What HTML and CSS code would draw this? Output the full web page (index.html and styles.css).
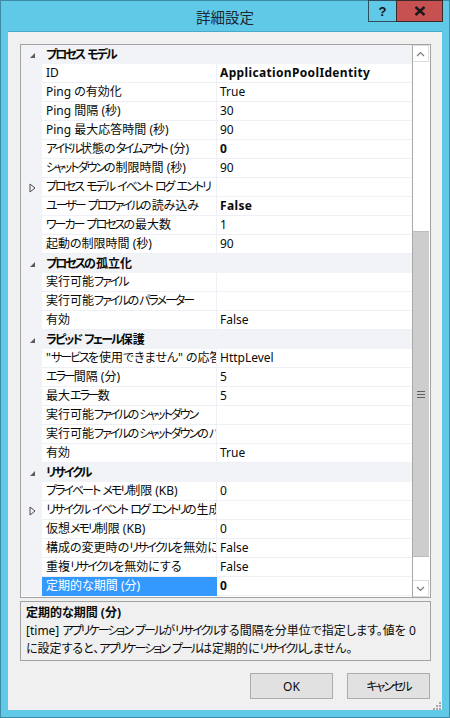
FILE: index.html
```html
<!DOCTYPE html>
<html lang="ja">
<head>
<meta charset="utf-8">
<title>詳細設定</title>
<link rel="stylesheet" href="styles.css">
</head>
<body>
<div class="window">
  <div class="titlebar">
    <span class="title">詳細設定</span>
    <div class="caption-buttons">
      <div class="cap help">?</div>
      <div class="cap close">
        <svg width="12" height="10" viewBox="0 0 12 10"><path d="M1.5 1 L10.5 9 M10.5 1 L1.5 9" stroke="#1a1a1a" stroke-width="2.4" fill="none"/></svg>
      </div>
    </div>
  </div>
  <div class="client">
    <div class="grid">
      <div class="rows">
        <div class="row cat"><span class="gut"><svg class="exp" width="7" height="7" viewBox="0 0 7 7"><polygon points="6,1 6,6 1,6" fill="#5a5a5a"/></svg></span><span class="cname"><span class="k">プロセス</span> <span class="k">モデル</span></span></div>
        <div class="row"><span class="gut"></span><span class="name">ID</span><span class="val b">ApplicationPoolIdentity</span></div>
        <div class="row"><span class="gut"></span><span class="name">Ping の有効化</span><span class="val">True</span></div>
        <div class="row"><span class="gut"></span><span class="name">Ping 間隔 (秒)</span><span class="val">30</span></div>
        <div class="row"><span class="gut"></span><span class="name">Ping 最大応答時間 (秒)</span><span class="val">90</span></div>
        <div class="row"><span class="gut"></span><span class="name"><span class="k">アイドル</span>状態の<span class="k">タイムアウト</span> (分)</span><span class="val b">0</span></div>
        <div class="row"><span class="gut"></span><span class="name"><span class="k">シャットダウン</span>の制限時間 (秒)</span><span class="val">90</span></div>
        <div class="row"><span class="gut"><svg class="col" width="7" height="10" viewBox="0 0 7 10"><polygon points="1,1 6,5 1,9" fill="none" stroke="#4a4a4a" stroke-width="1"/></svg></span><span class="name"><span class="k">プロセス</span> <span class="k">モデル</span> <span class="k">イベント</span> <span class="k">ログ</span> <span class="k">エントリ</span></span><span class="val"></span></div>
        <div class="row"><span class="gut"></span><span class="name"><span class="k">ユーザー</span> <span class="k">プロファイル</span>の読み込み</span><span class="val b">False</span></div>
        <div class="row"><span class="gut"></span><span class="name"><span class="k">ワーカー</span> <span class="k">プロセス</span>の最大数</span><span class="val">1</span></div>
        <div class="row"><span class="gut"></span><span class="name">起動の制限時間 (秒)</span><span class="val">90</span></div>
        <div class="row cat"><span class="gut"><svg class="exp" width="7" height="7" viewBox="0 0 7 7"><polygon points="6,1 6,6 1,6" fill="#5a5a5a"/></svg></span><span class="cname"><span class="k">プロセス</span>の孤立化</span></div>
        <div class="row"><span class="gut"></span><span class="name">実行可能<span class="k">ファイル</span></span><span class="val"></span></div>
        <div class="row"><span class="gut"></span><span class="name">実行可能<span class="k">ファイル</span>の<span class="k">パラメーター</span></span><span class="val"></span></div>
        <div class="row"><span class="gut"></span><span class="name">有効</span><span class="val">False</span></div>
        <div class="row cat"><span class="gut"><svg class="exp" width="7" height="7" viewBox="0 0 7 7"><polygon points="6,1 6,6 1,6" fill="#5a5a5a"/></svg></span><span class="cname"><span class="k">ラピッド</span> <span class="k">フェール</span>保護</span></div>
        <div class="row"><span class="gut"></span><span class="name">"<span class="k">サービス</span>を使用できません" の応答の種類</span><span class="val">HttpLevel</span></div>
        <div class="row"><span class="gut"></span><span class="name"><span class="k">エラー</span>間隔 (分)</span><span class="val">5</span></div>
        <div class="row"><span class="gut"></span><span class="name">最大<span class="k">エラー</span>数</span><span class="val">5</span></div>
        <div class="row"><span class="gut"></span><span class="name">実行可能<span class="k">ファイル</span>の<span class="k">シャットダウン</span></span><span class="val"></span></div>
        <div class="row"><span class="gut"></span><span class="name">実行可能<span class="k">ファイル</span>の<span class="k">シャットダウン</span>の<span class="k">パラメーター</span></span><span class="val"></span></div>
        <div class="row"><span class="gut"></span><span class="name">有効</span><span class="val">True</span></div>
        <div class="row cat"><span class="gut"><svg class="exp" width="7" height="7" viewBox="0 0 7 7"><polygon points="6,1 6,6 1,6" fill="#5a5a5a"/></svg></span><span class="cname"><span class="k">リサイクル</span></span></div>
        <div class="row"><span class="gut"></span><span class="name"><span class="k">プライベート</span> <span class="k">メモリ</span>制限 (KB)</span><span class="val">0</span></div>
        <div class="row"><span class="gut"><svg class="col" width="7" height="10" viewBox="0 0 7 10"><polygon points="1,1 6,5 1,9" fill="none" stroke="#4a4a4a" stroke-width="1"/></svg></span><span class="name"><span class="k">リサイクル</span> <span class="k">イベント</span> <span class="k">ログ</span> <span class="k">エントリ</span>の生成</span><span class="val"></span></div>
        <div class="row"><span class="gut"></span><span class="name">仮想<span class="k">メモリ</span>制限 (KB)</span><span class="val">0</span></div>
        <div class="row"><span class="gut"></span><span class="name">構成の変更時の<span class="k">リサイクル</span>を無効にする</span><span class="val">False</span></div>
        <div class="row"><span class="gut"></span><span class="name">重複<span class="k">リサイクル</span>を無効にする</span><span class="val">False</span></div>
        <div class="row sel"><span class="gut"></span><span class="name">定期的な期間 (分)</span><span class="val b">0</span></div>
      </div>
      <div class="scrollbar">
        <div class="arrow up"><svg width="9" height="6" viewBox="0 0 9 6"><path d="M1 5 L4.5 1.5 L8 5" stroke="#7a7a7a" stroke-width="1.2" fill="none"/></svg></div>
        <div class="track-top"></div>
        <div class="thumb"><svg width="8" height="7" viewBox="0 0 8 7"><path d="M0 0.5 H8 M0 3.5 H8 M0 6.5 H8" stroke="#606060" stroke-width="1"/></svg></div>
        <div class="track-bottom"></div>
        <div class="arrow down"><svg width="9" height="6" viewBox="0 0 9 6"><path d="M1 1 L4.5 4.5 L8 1" stroke="#7a7a7a" stroke-width="1.2" fill="none"/></svg></div>
      </div>
    </div>
    <div class="desc">
      <div class="desc-title">定期的な期間 (分)</div>
      <div class="desc-text">[time] <span class="k">アプリケーション</span> <span class="k">プール</span>が<span class="k">リサイクル</span>する間隔を分単位で指定します。値を 0 に設定すると、<span class="k">アプリケーション</span> <span class="k">プール</span>は定期的に<span class="k">リサイクル</span>しません。</div>
    </div>
    <div class="buttons">
      <button class="btn">OK</button>
      <button class="btn"><span class="k">キャンセル</span></button>
    </div>
    <div class="grip">
      <svg width="10" height="10" viewBox="0 0 10 10"><g fill="#a8a8a8"><rect x="8" y="0" width="2" height="2"/><rect x="5" y="3" width="2" height="2"/><rect x="8" y="3" width="2" height="2"/><rect x="2" y="6" width="2" height="2"/><rect x="5" y="6" width="2" height="2"/><rect x="8" y="6" width="2" height="2"/></g></svg>
    </div>
  </div>
</div>
</body>
</html>
```

FILE: styles.css
```css
* { box-sizing: border-box; }
html, body { margin: 0; padding: 0; }
body {
  width: 450px;
  height: 718px;
  overflow: hidden;
  font-family: "Noto Sans", "Noto Sans CJK JP", sans-serif;
  font-size: 12px;
  color: #0a0a0a;
  font-feature-settings: "palt";
}
.k { letter-spacing: -2px; }
.window {
  width: 450px;
  height: 718px;
  background: #60c9e8;
  border: 1px solid #3f8aa6;
  display: flex;
  flex-direction: column;
  position: relative;
}
.titlebar {
  height: 30px;
  display: flex;
  align-items: center;
  justify-content: center;
  flex: none;
}
.title {
  font-family: "Noto Sans CJK JP", sans-serif;
  font-size: 14.5px;
  color: #1c2a30;
  margin-top: 1px;
}
.caption-buttons {
  position: absolute;
  top: -1px;
  right: 6px;
  display: flex;
}
.cap {
  height: 22px;
  display: flex;
  align-items: center;
  justify-content: center;
  border: 1px solid #2e4e5c;
}
.help {
  width: 28px;
  background: #60c9e8;
  font-family: "Liberation Sans", sans-serif;
  font-weight: bold;
  font-size: 13px;
  color: #111;
  border-right: none;
}
.close {
  width: 47px;
  background: #c75050;
  border-color: #3c2a2a;
}
.client {
  flex: 1;
  margin: 0 7px 7px 7px;
  background: #f0f0f0;
  padding: 12px 11px 0 12px;
  display: flex;
  flex-direction: column;
  position: relative;
  border-top: 1px solid #4aa8c8;
}
.grid {
  height: 554px;
  border: 1px solid #a3a3a3;
  background: #ffffff;
  display: flex;
  flex: none;
}
.rows {
  width: 391px;
  display: flex;
  flex-direction: column;
}
.row {
  height: 19px;
  display: grid;
  grid-template-columns: 21px 175px 1fr;
  line-height: 18px;
  white-space: nowrap;
}
.gut {
  background: #f2f3f6;
  display: flex;
  align-items: center;
  justify-content: center;
}
.name {
  overflow: hidden;
  padding-left: 4px;
  border-right: 1px solid #eef0f6;
  border-bottom: 1px solid #eef0f6;
}
.val {
  overflow: hidden;
  padding-left: 3px;
  border-bottom: 1px solid #eef0f6;
}
.b { font-weight: bold; letter-spacing: 0.35px; }
.cat {
  grid-template-columns: 21px 1fr;
  background: #f2f3f6;
}
.cname {
  font-weight: bold;
  padding-left: 4px;
  line-height: 19px;
}
.exp { margin-left: 1px; margin-top: 1px; }
.col { margin-left: 1px; }
.sel .name {
  background: #3399ff;
  color: #ffffff;
  border-color: #3399ff;
}
.scrollbar {
  width: 17px;
  border-left: 1px solid #a8a8a8;
  display: flex;
  flex-direction: column;
  background: #ffffff;
}
.arrow {
  height: 17px;
  display: flex;
  align-items: center;
  justify-content: center;
  background: #ffffff;
  border: 1px solid #dcdcdc;
  border-left: none;
}
.track-top { height: 169px; background: #ffffff; }
.thumb {
  height: 326px;
  background: #cdcdcd;
  border-top: 1px solid #bdbdbd;
  border-bottom: 1px solid #bdbdbd;
  display: flex;
  align-items: center;
  justify-content: center;
}
.track-bottom { flex: 1; background: #ffffff; }
.desc {
  margin-top: 3px;
  height: 60px;
  border: 1px solid #a3a3a3;
  padding: 2px 5px 0 5px;
  line-height: 18px;
  flex: none;
}
.desc-title { font-weight: bold; }
.buttons {
  margin-top: 12px;
  display: flex;
  justify-content: flex-end;
  gap: 14px;
  padding-right: 1px;
}
.btn {
  width: 83px;
  height: 26px;
  background: #e1e1e1;
  border: 1px solid #adadad;
  font-family: "Noto Sans", "Noto Sans CJK JP", sans-serif;
  font-size: 12px;
  color: #0a0a0a;
  padding: 0;
  font-feature-settings: "palt";
}
.grip {
  position: absolute;
  right: 1px;
  bottom: 1px;
  width: 10px;
  height: 10px;
}
```
